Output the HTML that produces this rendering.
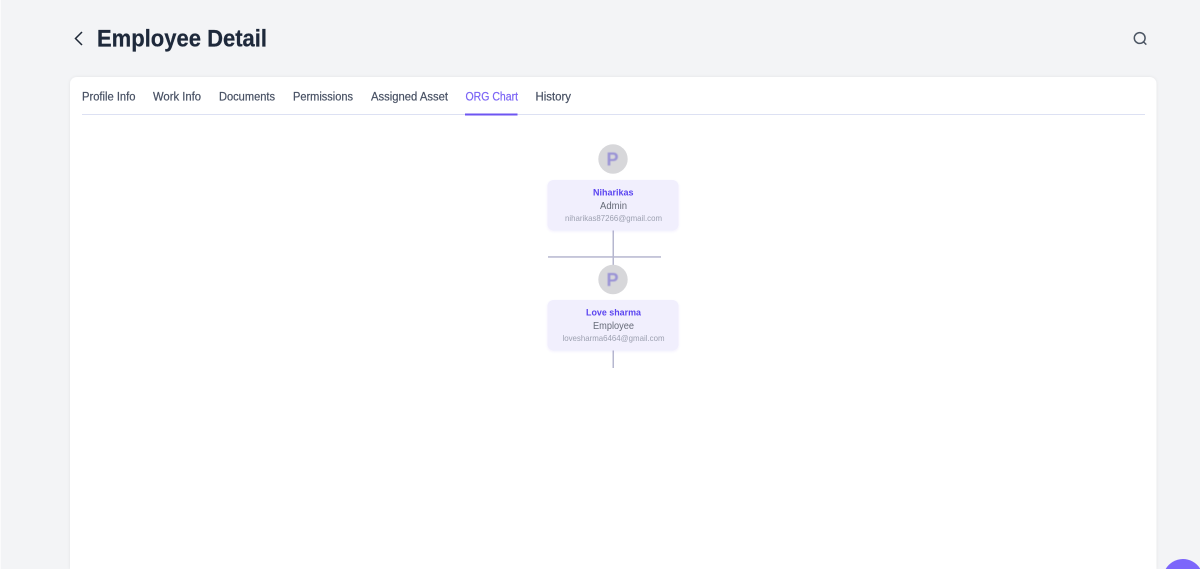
<!DOCTYPE html>
<html lang="en"><head><meta charset="utf-8"><title>Employee Detail</title>
<style>
html,body{margin:0;padding:0;width:1200px;height:569px;overflow:hidden;background:#f3f4f6}
svg{display:block;position:absolute;left:0;top:0}
text{font-family:"Liberation Sans",sans-serif}
</style></head><body>
<svg width="1200" height="569" viewBox="0 0 1200 569" xmlns="http://www.w3.org/2000/svg">
<defs><filter id="s" x="-5%" y="-5%" width="110%" height="110%"><feDropShadow dx="0" dy="0" stdDeviation="1.5" flood-color="#000" flood-opacity=".07"/></filter>
<filter id="b" x="-10%" y="-20%" width="120%" height="140%"><feDropShadow dx="0" dy="1" stdDeviation="1" flood-color="#5b43e8" flood-opacity=".08"/></filter>
<filter id="a" x="-20%" y="-20%" width="140%" height="140%"><feGaussianBlur stdDeviation=".45"/></filter></defs>
<rect x="0" y="0" width="1" height="569" fill="#fbfbfc"/>
<path d="M82 32L75.500 38.500L82 45" fill="none" stroke="#1f2937" stroke-width="1.500"/>
<text x="97" y="46.500" font-size="24" font-weight="700" fill="#1e293b" stroke="#1e293b" stroke-width=".25" textLength="170" lengthAdjust="spacingAndGlyphs">Employee Detail</text>
<circle cx="1139.700" cy="38" r="5.400" fill="none" stroke="#4b5563" stroke-width="1.500"/>
<path d="M1143.700 42L1146.300 44.600" stroke="#4b5563" stroke-width="1.500" fill="none"/>
<path d="M70 569V84a7 7 0 0 1 7-7H1149.500a7 7 0 0 1 7 7V569Z" fill="#fff" filter="url(#s)"/>
<g font-size="11.500" fill="#475063" stroke="#475063" stroke-width=".2">
<text x="82" y="100.700" textLength="53.500" lengthAdjust="spacingAndGlyphs">Profile Info</text>
<text x="153" y="100.700" textLength="48" lengthAdjust="spacingAndGlyphs">Work Info</text>
<text x="219" y="100.700" textLength="56" lengthAdjust="spacingAndGlyphs">Documents</text>
<text x="293" y="100.700" textLength="60" lengthAdjust="spacingAndGlyphs">Permissions</text>
<text x="371" y="100.700" textLength="77" lengthAdjust="spacingAndGlyphs">Assigned Asset</text>
<text x="465.500" y="100.700" textLength="52.500" lengthAdjust="spacingAndGlyphs" fill="#7a63f5" stroke="#7a63f5">ORG Chart</text>
<text x="535.500" y="100.700" textLength="35.500" lengthAdjust="spacingAndGlyphs">History</text>
</g>
<rect x="82" y="114" width="1063" height="1" fill="#dde1f3"/>
<rect x="465" y="113.500" width="52.500" height="2" fill="#6d55f2"/>
<g fill="#b6b7cf">
<rect x="612.500" y="230" width="1.500" height="36"/>
<rect x="548" y="256.200" width="113" height="1.500"/>
<rect x="612.500" y="350" width="1.500" height="18"/>
</g>
<circle cx="613" cy="159" r="14.700" fill="#d7d7da"/>
<text x="612.500" y="165.500" font-size="18" font-weight="700" text-anchor="middle" fill="#9a93d6" filter="url(#a)">P</text>
<rect x="547.500" y="180" width="131" height="50.500" rx="6" fill="#f1effd" filter="url(#b)"/>
<text x="593" y="195.700" font-size="9.500" font-weight="700" fill="#5b45f0" textLength="40.500" lengthAdjust="spacingAndGlyphs">Niharikas</text>
<text x="600" y="209" font-size="10" fill="#666b78" textLength="27" lengthAdjust="spacingAndGlyphs">Admin</text>
<text x="565" y="221" font-size="8.200" fill="#9da1b1" textLength="97" lengthAdjust="spacingAndGlyphs">niharikas87266@gmail.com</text>
<circle cx="613" cy="279.500" r="14.700" fill="#d7d7da"/>
<text x="612.500" y="286" font-size="18" font-weight="700" text-anchor="middle" fill="#9a93d6" filter="url(#a)">P</text>
<rect x="547.500" y="300" width="131" height="50.500" rx="6" fill="#f1effd" filter="url(#b)"/>
<text x="586" y="315.700" font-size="9.500" font-weight="700" fill="#5b45f0" textLength="55" lengthAdjust="spacingAndGlyphs">Love sharma</text>
<text x="593" y="329" font-size="10" fill="#666b78" textLength="41" lengthAdjust="spacingAndGlyphs">Employee</text>
<text x="562.500" y="341" font-size="8.200" fill="#9da1b1" textLength="102" lengthAdjust="spacingAndGlyphs">lovesharma6464@gmail.com</text>
<path d="M1165.700 569A20 20 0 0 1 1200 568.500V569Z" fill="#7c66fb"/>
</svg>
</body></html>
